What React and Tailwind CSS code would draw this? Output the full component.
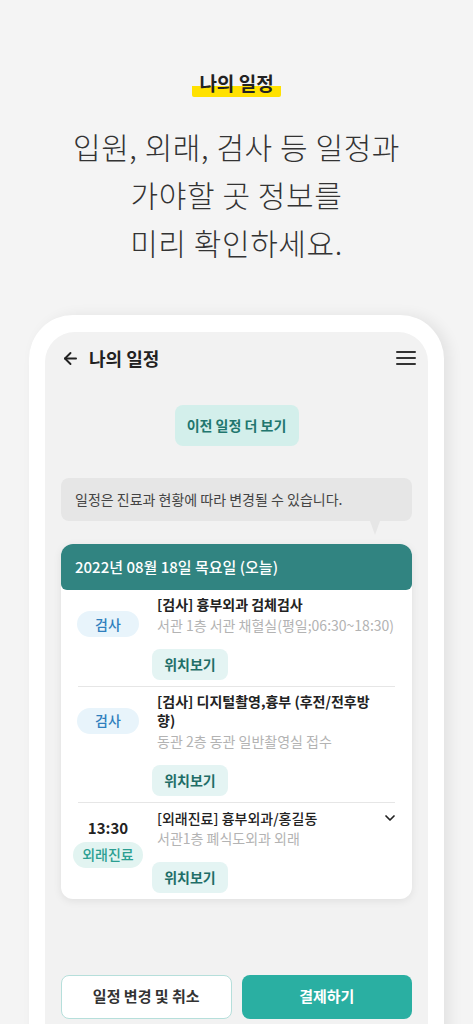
import React from 'react';
import { ArrowLeft, ChevronDown } from 'lucide-react';

const rows = [
    {
        badge: '검사',
        title: ['[검사] 흉부외과 검체검사'],
        place: '서관 1층 서관 채혈실(평일;06:30~18:30)',
    },
    {
        badge: '검사',
        title: ['[검사] 디지털촬영,흉부 (후전/전후방', '향)'],
        place: '동관 2층 동관 일반촬영실 접수',
    },
];

function LocationButton() {
    return (
        <button className="-ml-[5px] mt-[14px] h-[31px] w-[76px] rounded-[8px] bg-[#e4f4f3] text-[14px] font-bold text-[#1f6e68]">
            위치보기
        </button>
    );
}

function Divider() {
    return <div className="mx-[17px] h-px bg-[#e6e6e6]" />;
}

function ExamRow({ row }) {
    return (
        <div className="flex px-[12px] pt-[5px] pb-[6px]">
            <div className="w-[70px] shrink-0 flex justify-center pt-[16px]">
                <span className="flex h-[26px] w-[62px] items-center justify-center rounded-full bg-[#e8f4fb] text-[14px] font-medium text-[#2f7fbd]">
                    {row.badge}
                </span>
            </div>
            <div className="ml-[14px] flex min-w-0 flex-1 flex-col items-start">
                <p className="whitespace-nowrap text-[14px] font-bold leading-[19.5px] text-[#222]">
                    {row.title.map((t, i) => (
                        <React.Fragment key={i}>
                            {t}
                            {i < row.title.length - 1 && <br />}
                        </React.Fragment>
                    ))}
                </p>
                <p className="whitespace-nowrap text-[14px] leading-[20px] text-[#b3b3b3]">{row.place}</p>
                <LocationButton />
            </div>
        </div>
    );
}

export default function App() {
    return (
        <div className="h-[1024px] w-full overflow-hidden bg-[#f4f4f4] font-['Noto_Sans_CJK_KR','Noto_Sans',sans-serif]">
            {/* intro copy */}
            <div className="flex flex-col items-center pt-[72px]">
                <span className="inline-block h-[25px] rounded-[2px] bg-[linear-gradient(to_bottom,transparent_56%,#ffe100_56%)] px-[7px] text-[19px] font-bold leading-[22px] text-[#222]">
                    나의 일정
                </span>
                <h1 className="mt-[25px] text-center text-[30px] font-light leading-[48px] tracking-[0.6px] text-[#333]">
                    입원, 외래, 검사 등 일정과
                    <br />
                    가야할 곳 정보를
                    <br />
                    미리 확인하세요.
                </h1>
            </div>

            {/* phone frame */}
            <div className="mx-auto mt-[49px] w-[415px] rounded-t-[44px] bg-white px-[16px] pt-[17px] shadow-[6px_0_14px_rgba(0,0,0,0.07)]">
                <div className="min-h-[720px] rounded-t-[30px] bg-[#f2f2f2] px-[16px] pt-[12px]">
                    <div className="flex h-[28px] items-center">
                        <ArrowLeft size={19} strokeWidth={2.4} className="text-[#222]" />
                        <span className="ml-[9px] text-[18px] font-bold text-[#222]">나의 일정</span>
                        <svg className="ml-auto mr-[-4px]" width="20" height="16" viewBox="0 0 20 16">
                            <path d="M1 2h18M1 8h18M1 14h18" stroke="#333" strokeWidth="2" strokeLinecap="round" />
                        </svg>
                    </div>

                    <div className="mt-[33px] flex justify-center">
                        <button className="h-[41px] w-[124px] rounded-[8px] bg-[#d3efeb] text-[14px] font-bold text-[#21766e]">
                            이전 일정 더 보기
                        </button>
                    </div>

                    <div className="relative mt-[32px] flex h-[43px] items-center rounded-[8px] bg-[#e6e6e6] px-[14px] text-[14px] text-[#444]">
                        일정은 진료과 현황에 따라 변경될 수 있습니다.
                        <span className="absolute right-[32px] top-full h-0 w-0 border-x-[5px] border-t-[14px] border-x-transparent border-t-[#e6e6e6]" />
                    </div>

                    {/* schedule card */}
                    <div className="mt-[23px] overflow-hidden rounded-[12px] bg-white shadow-[0_2px_8px_rgba(0,0,0,0.08)]">
                        <div className="flex h-[46px] items-center rounded-b-[6px] bg-[#318481] px-[14px] text-[15px] font-medium text-white">
                            2022년 08월 18일 목요일 (오늘)
                        </div>
                        <ExamRow row={rows[0]} />
                        <Divider />
                        <ExamRow row={rows[1]} />
                        <Divider />
                        <div className="flex px-[12px] pt-[5px] pb-[6px]">
                            <div className="flex w-[70px] shrink-0 flex-col items-center pt-[10px]">
                                <span className="text-[15px] font-bold leading-[20px] text-[#222]">13:30</span>
                                <span className="mt-[4px] flex h-[26px] w-[70px] items-center justify-center rounded-full bg-[#e2f4f1] text-[14px] font-medium text-[#2b9f92]">
                                    외래진료
                                </span>
                            </div>
                            <div className="ml-[14px] flex min-w-0 flex-1 flex-col items-start">
                                <div className="flex w-full items-center">
                                    <p className="whitespace-nowrap text-[14px] font-medium leading-[20px] text-[#222]">
                                        [외래진료] 흉부외과/홍길동
                                    </p>
                                    <ChevronDown size={16} strokeWidth={2.6} className="ml-auto mr-[2px] text-[#222]" />
                                </div>
                                <p className="whitespace-nowrap text-[14px] leading-[20px] text-[#b3b3b3]">서관1층 폐식도외과 외래</p>
                                <LocationButton />
                            </div>
                        </div>
                    </div>

                    {/* actions */}
                    <div className="mt-[76px] grid grid-cols-2 gap-[10px] pb-[40px]">
                        <button className="h-[44px] rounded-[8px] border-[1.5px] border-[#b6dfdb] bg-white text-[15px] font-bold text-[#333]">
                            일정 변경 및 취소
                        </button>
                        <button className="h-[44px] rounded-[8px] bg-[#2aafa2] text-[15px] font-bold text-white">
                            결제하기
                        </button>
                    </div>
                </div>
            </div>
        </div>
    );
}
